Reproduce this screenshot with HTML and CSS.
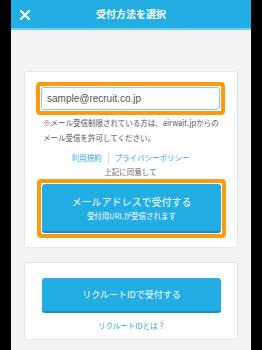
FILE: index.html
```html
<!DOCTYPE html>
<html lang="ja">
<head>
<meta charset="utf-8">
<link rel="stylesheet" href="styles.css">
</head>
<body>
<div class="app">
  <header class="header">
    <svg class="close" width="10" height="10" viewBox="0 0 10 10"><path d="M1 1L9 9M9 1L1 9" stroke="#fff" stroke-width="2" stroke-linecap="square"/></svg>
    <h1 class="title">受付方法を選択</h1>
  </header>
  <main class="main">
    <section class="card card-mail">
      <div class="focus">
        <div class="input">sample@recruit.co.jp</div>
      </div>
      <p class="note">※メール受信制限されている方は、airwait.jpからのメール受信を許可してください。</p>
      <div class="links"><a class="link">利用規約</a><span class="sep"></span><a class="link">プライバシーポリシー</a></div>
      <p class="agree">上記に同意して</p>
      <div class="focus focus-btn">
        <div class="btn btn-main">
          <span class="btn-label">メールアドレスで受付する</span>
          <span class="btn-sub">受付用URLが受信されます</span>
        </div>
      </div>
    </section>
    <section class="card card-id">
      <div class="btn btn-id">リクルートIDで受付する</div>
      <a class="link about">リクルートIDとは？</a>
    </section>
  </main>
</div>
</body>
</html>
```
FILE: styles.css
```css
* { box-sizing: border-box; margin: 0; padding: 0; }
html, body { background: #000; }
body { font-family: "Noto Sans CJK JP", "Noto Sans", sans-serif; }
.app {
  width: 240px;
  height: 350px;
  margin-left: 11px;
  background: #f2f3f5;
}
.header {
  height: 30px;
  background: #22ade3;
  border-bottom: 2px solid #72cbf0;
  display: flex;
  align-items: center;
  position: relative;
}
.close { position: absolute; left: 9px; top: 10px; }
.title {
  flex: 1;
  text-align: center;
  color: #fff;
  font-size: 10px;
  font-weight: bold;
  line-height: 28px;
}
.main { padding: 41px 13px 0; display: flex; flex-direction: column; gap: 14px; }
.card {
  background: #fff;
  border: 1px solid #e3e5e8;
  border-radius: 3px;
}
.card-mail { padding: 10px 12px 9px 11px; display: flex; flex-direction: column; }
.focus {
  width: 189px;
  border: 4px solid #ff9a0e;
  border-radius: 4px;
  padding: 1px;
  background: #fff;
}
.input {
  height: 23px;
  border: 1px solid #7fcdf0;
  border-radius: 3px;
  padding-left: 5px;
  font-family: "Liberation Sans", Arial, sans-serif;
  font-size: 10px;
  line-height: 21px;
  color: #555;
}
.note {
  margin-top: 1px;
  padding-left: 7px;
  font-size: 7.5px;
  line-height: 14.5px;
  color: #555;
}
.links {
  margin-top: 7px;
  display: flex;
  justify-content: center;
  align-items: center;
  height: 12px;
  gap: 6px;
}
.link { color: #2aa8e0; font-size: 7.5px; line-height: 12px; text-decoration: none; }
.sep { width: 1px; height: 11px; background: #d9dbde; }
.agree {
  margin-top: 2px;
  text-align: center;
  font-size: 7.5px;
  line-height: 12px;
  color: #666;
}
.focus-btn { margin-top: 1px; margin-left: 1px; }
.btn {
  background: #22ade3;
  border-radius: 3px;
  border-bottom: 2px solid #1a8bbd;
  color: #fff;
  display: flex;
  flex-direction: column;
  align-items: center;
  justify-content: center;
}
.btn-main { height: 49px; }
.btn-label { font-size: 10px; line-height: 14px; }
.btn-sub { font-size: 7.5px; line-height: 10px; margin-top: 2px; }
.card-id { padding: 15px 16px 7px 17px; display: flex; flex-direction: column; align-items: center; }
.btn-id { width: 179px; height: 35px; font-size: 9px; }
.about { margin-top: 7px; }
```
